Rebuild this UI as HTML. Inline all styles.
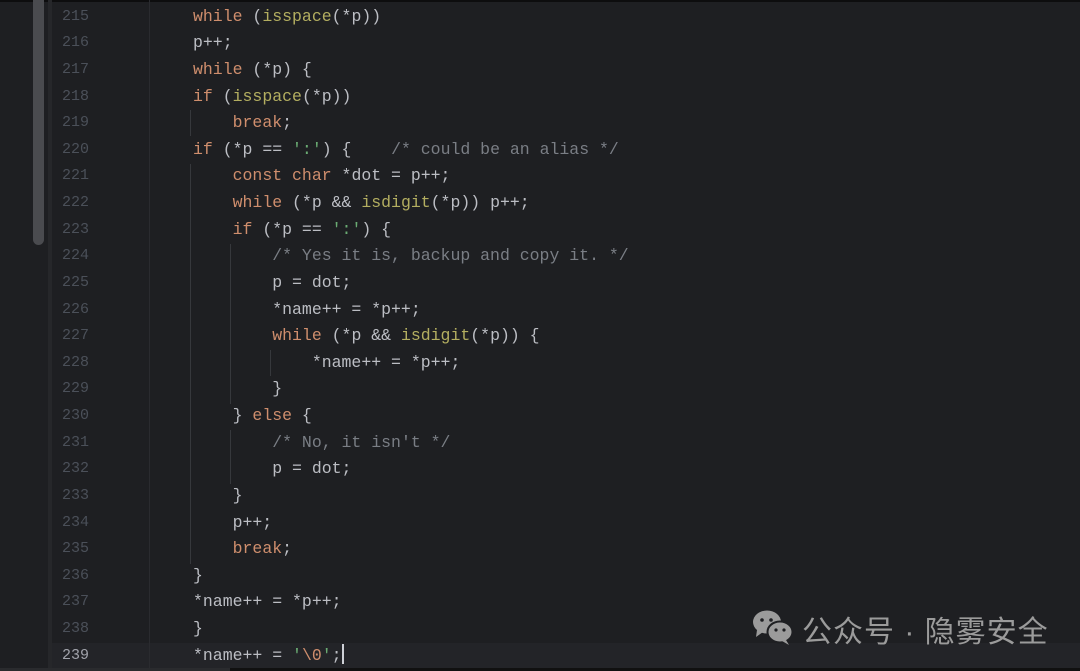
<!DOCTYPE html>
<html><head><meta charset="utf-8"><style>
*{margin:0;padding:0;box-sizing:border-box}
body{width:1080px;height:671px;background:#1e1f22;overflow:hidden;position:relative;font-family:"Liberation Mono",monospace}
.top{position:absolute;left:0;top:0;width:1080px;height:2px;background:#0d0d0e}
.sb{position:absolute;left:33px;top:0;width:11px;height:245px;background:#4a4b4f;border-radius:0 0 6px 6px}
.strip{position:absolute;left:48px;top:0;width:4px;height:671px;background:#26272a}
.sep{position:absolute;left:149px;top:0;width:1px;height:671px;background:#2a2b2f}
.cur{position:absolute;left:52px;top:643px;width:1028px;height:26px;background:#232428}
.bot{position:absolute;left:0;top:668px;width:1080px;height:3px;background:#111}
.bot2{position:absolute;left:0;top:668px;width:230px;height:3px;background:#2a2b2e}
.ln{position:absolute;left:62px;font-size:15px;color:#4b5059;line-height:26.63px}
.code{position:absolute;left:193px;top:3.7px;font-size:16.5px;line-height:26.63px;color:#bcbec4;white-space:pre}
.k{color:#cf8e6d}.f{color:#b3ae60}.s{color:#6aab73}.c{color:#7a7e85}
.g{position:absolute;width:1px;background:#36383c}
.wm{position:absolute;left:802px;top:607px;font-family:"Liberation Sans","Noto Sans CJK SC",sans-serif;font-size:30px;color:#9b9b9b;letter-spacing:1px}
</style></head><body>
<div class="top"></div><div class="cur"></div>
<div class="sb"></div><div class="strip"></div><div class="sep"></div>
<div class="ln" style="top:3.7px">215<br>216<br>217<br>218<br>219<br>220<br>221<br>222<br>223<br>224<br>225<br>226<br>227<br>228<br>229<br>230<br>231<br>232<br>233<br>234<br>235<br>236<br>237<br>238<br><span style="color:#a1a3ab">239</span></div>
<div class="g" style="left:190px;top:110px;height:26px"></div>
<div class="g" style="left:190px;top:164px;height:400px"></div>
<div class="g" style="left:230px;top:244px;height:160px"></div>
<div class="g" style="left:270px;top:350px;height:26px"></div>
<div class="g" style="left:230px;top:430px;height:54px"></div>
<div class="code"><span class="k">while</span> (<span class="f">isspace</span>(*p))
p++;
<span class="k">while</span> (*p) {
<span class="k">if</span> (<span class="f">isspace</span>(*p))
    <span class="k">break</span>;
<span class="k">if</span> (*p == <span class="s">':'</span>) {    <span class="c">/* could be an alias */</span>
    <span class="k">const char</span> *dot = p++;
    <span class="k">while</span> (*p &amp;&amp; <span class="f">isdigit</span>(*p)) p++;
    <span class="k">if</span> (*p == <span class="s">':'</span>) {
        <span class="c">/* Yes it is, backup and copy it. */</span>
        p = dot;
        *name++ = *p++;
        <span class="k">while</span> (*p &amp;&amp; <span class="f">isdigit</span>(*p)) {
            *name++ = *p++;
        }
    } <span class="k">else</span> {
        <span class="c">/* No, it isn't */</span>
        p = dot;
    }
    p++;
    <span class="k">break</span>;
}
*name++ = *p++;
}
*name++ = <span class="s">'</span><span class="k">\0</span><span class="s">'</span>;<span style="display:inline-block;width:2px;height:20px;background:#ced0d6;vertical-align:-4px"></span></div>
<svg style="position:absolute;left:752px;top:610px" width="42" height="36" viewBox="0 0 42 36">
<ellipse cx="15" cy="12" rx="14" ry="11.5" fill="#9b9b9b"/>
<path d="M5 20 L4 27 L11 22Z" fill="#9b9b9b"/>
<ellipse cx="28" cy="22" rx="12.5" ry="10.5" fill="#9b9b9b" stroke="#1e1f22" stroke-width="2"/>
<path d="M34 30 L37 35 L30 31Z" fill="#9b9b9b"/>
<circle cx="10" cy="10" r="1.8" fill="#1e1f22"/><circle cx="19" cy="10" r="1.8" fill="#1e1f22"/>
<circle cx="24" cy="20" r="1.6" fill="#1e1f22"/><circle cx="32" cy="20" r="1.6" fill="#1e1f22"/>
</svg>
<div class="wm">公众号 · 隐雾安全</div>
<div class="bot"></div><div class="bot2"></div>
</body></html>
